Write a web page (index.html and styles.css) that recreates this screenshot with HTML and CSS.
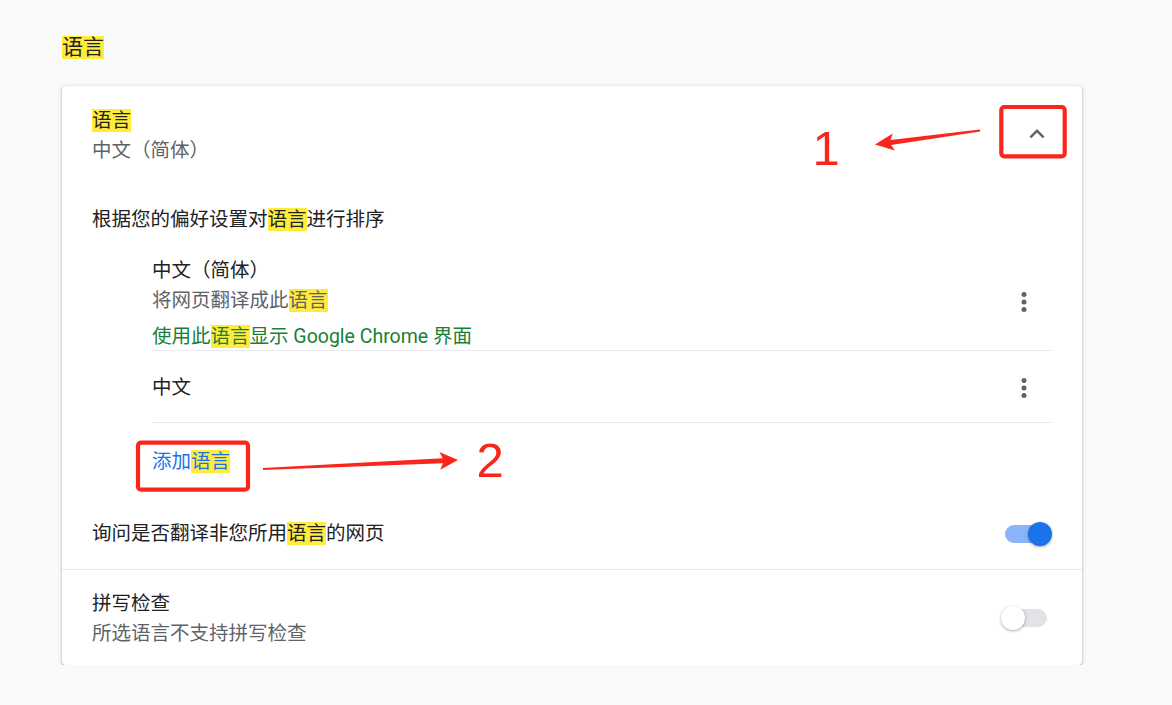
FILE: index.html
```html
<!DOCTYPE html>
<html lang="zh-CN">
<head>
<meta charset="utf-8">
<title>语言</title>
<link rel="stylesheet" href="styles.css">
</head>
<body>
<main class="page">
  <h2 class="page-title"><span class="hl">语言</span></h2>
  <section class="card">
    <div class="header-row">
      <div class="row-text">
        <div class="primary"><span class="hl">语言</span></div>
        <div class="secondary">中文（简体）</div>
      </div>
      <button class="icon-btn expand" aria-label="收起">
        <svg viewBox="0 0 24 24" width="30" height="30"><path d="M12 8l-6 6 1.41 1.41L12 10.83l4.59 4.58L18 14z" fill="#5f6368"/></svg>
      </button>
    </div>
    <div class="expanded">
      <div class="sort-title">根据您的偏好设置对<span class="hl">语言</span>进行排序</div>
      <ul class="lang-list">
        <li class="lang-item first">
          <div class="lang-text">
            <div class="primary">中文（简体）</div>
            <div class="secondary">将网页翻译成此<span class="hl">语言</span></div>
            <div class="ui-lang">使用此<span class="hl">语言</span>显示 Google Chrome 界面</div>
          </div>
          <button class="icon-btn kebab" aria-label="更多操作">
            <svg viewBox="0 0 24 24" width="30" height="30"><circle cx="12" cy="6" r="2" fill="#5f6368"/><circle cx="12" cy="12" r="2" fill="#5f6368"/><circle cx="12" cy="18" r="2" fill="#5f6368"/></svg>
          </button>
        </li>
        <li class="lang-item single">
          <div class="lang-text">
            <div class="primary">中文</div>
          </div>
          <button class="icon-btn kebab" aria-label="更多操作">
            <svg viewBox="0 0 24 24" width="30" height="30"><circle cx="12" cy="6" r="2" fill="#5f6368"/><circle cx="12" cy="12" r="2" fill="#5f6368"/><circle cx="12" cy="18" r="2" fill="#5f6368"/></svg>
          </button>
        </li>
      </ul>
      <div class="add-row"><a class="add-link">添加<span class="hl">语言</span></a></div>
      <div class="ask-row">
        <div class="primary grow">询问是否翻译非您所用<span class="hl">语言</span>的网页</div>
        <span class="toggle on"><span class="track"></span><span class="knob"></span></span>
      </div>
    </div>
    <div class="spell-row">
      <div class="row-text">
        <div class="primary">拼写检查</div>
        <div class="secondary">所选语言不支持拼写检查</div>
      </div>
      <span class="toggle off"><span class="track"></span><span class="knob"></span></span>
    </div>
  </section>
</main>
<svg class="annotations" width="1172" height="705" viewBox="0 0 1172 705">
  <rect x="1001.3" y="107" width="63.4" height="49.3" rx="3" fill="none" stroke="#f9261b" stroke-width="4.2"/>
  <rect x="138" y="442.7" width="110" height="47" rx="3" fill="none" stroke="#f9261b" stroke-width="4.2"/>
  <polygon fill="#f9261b" points="980.1,131.6 891.1,144.9 894.9,150.4 875,144.5 892.7,133.6 890.5,139.9 979.9,129.4"/>
  <polygon fill="#f9261b" points="263,469.9 442.9,463.2 440.2,469.8 458,460 439.4,451.9 442.7,458.2 263,468.1"/>
  <text x="812.5" y="165" class="num">1</text>
  <text x="476.5" y="476.7" class="num">2</text>
</svg>
</body>
</html>
```
FILE: styles.css
```css
* { box-sizing: border-box; }

body {
  margin: 0;
  background: #f8f9fa;
  font-family: Roboto, "Noto Sans CJK SC", sans-serif;
  color: #202124;
  font-size: 19.5px;
  line-height: 30px;
}

.page {
  width: 1082px;
  padding: 32px 0 0 62px;
}

.page-title {
  margin: 0;
  font-size: 21px;
  font-weight: 400;
  line-height: 30px;
}

.hl {
  display: inline-block;
  background: #ffeb3b;
  line-height: 23px;
}

.card {
  margin-top: 24px;
  width: 1020px;
  background: #fff;
  border-radius: 4px;
  box-shadow: 0 1px 2px rgba(60, 64, 67, 0.3), 0 1px 3px 1px rgba(60, 64, 67, 0.15);
}

.header-row {
  height: 96px;
  display: flex;
  align-items: center;
  padding: 0 30px;
}

.header-row .row-text { padding-top: 4px; }

.row-text { flex: 1; }
.grow { flex: 1; }

.primary { color: #202124; }
.secondary { color: #5f6368; }

.icon-btn {
  border: 0;
  background: none;
  padding: 0;
  margin: 0;
  display: flex;
  align-items: center;
  justify-content: center;
  height: 30px;
}

.icon-btn svg { display: block; }

.expand { width: 30px; }

.expanded { padding: 0 30px; }

.sort-title { padding-top: 23px; }

.lang-list {
  list-style: none;
  margin: 19px 0 0;
  padding: 0 0 0 60px;
}

.lang-item {
  display: flex;
  align-items: center;
  border-bottom: 1px solid #e8eaed;
}

.lang-item.first .lang-text { padding-top: 2px; }

.lang-item.single { padding: 22px 0 19px; }

.lang-text { flex: 1; }

.ui-lang {
  margin-top: 8px;
  line-height: 26px;
  color: #188038;
}

.kebab { width: 56px; }

.add-row { padding: 24px 0 21px 60px; }

.add-link {
  color: #1a73e8;
  text-decoration: none;
}

.ask-row {
  height: 71px;
  display: flex;
  align-items: center;
}

.spell-row {
  display: flex;
  align-items: center;
  border-top: 1px solid #e8eaed;
  padding: 19px 35px 16px 30px;
}

.toggle {
  position: relative;
  display: block;
  height: 24px;
  flex: none;
}

.spell-row .toggle { margin-top: -2px; }

.toggle .track {
  position: absolute;
  top: 3px;
  width: 42px;
  height: 18px;
  border-radius: 9px;
}

.toggle .knob {
  position: absolute;
  top: 0;
  width: 24px;
  height: 24px;
  border-radius: 50%;
  box-shadow: 0 1px 3px rgba(0, 0, 0, 0.35);
}

.toggle.on { width: 47px; }
.toggle.on .track { left: 0; background: #8ab4f8; }
.toggle.on .knob { right: 0; background: #1a73e8; }

.toggle.off { width: 46px; }
.toggle.off .track { left: 4px; background: #e1e3e6; }
.toggle.off .knob { left: 0; background: #fff; }

.annotations {
  position: absolute;
  left: 0;
  top: 0;
  pointer-events: none;
}

.num {
  font-family: "Liberation Sans", Arial, sans-serif;
  font-size: 49px;
  fill: #f9261b;
}
```
